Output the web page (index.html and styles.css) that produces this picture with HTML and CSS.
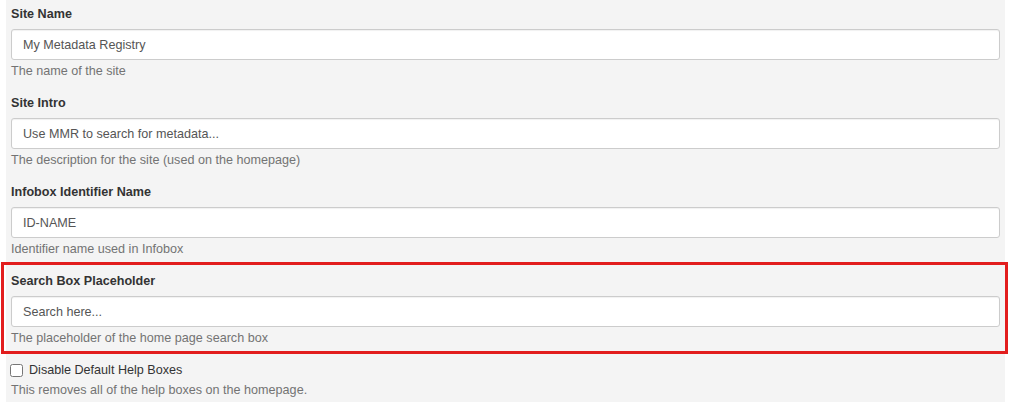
FILE: index.html
```html
<!DOCTYPE html>
<html>
<head>
<meta charset="utf-8">
<link rel="stylesheet" href="styles.css">
</head>
<body>
<div class="panel">
  <div class="form-group">
    <label class="control-label">Site Name</label>
    <input class="form-control" type="text" value="My Metadata Registry">
    <div class="help-block">The name of the site</div>
  </div>
  <div class="form-group">
    <label class="control-label">Site Intro</label>
    <input class="form-control" type="text" value="Use MMR to search for metadata...">
    <div class="help-block">The description for the site (used on the homepage)</div>
  </div>
  <div class="form-group">
    <label class="control-label">Infobox Identifier Name</label>
    <input class="form-control" type="text" value="ID-NAME">
    <div class="help-block">Identifier name used in Infobox</div>
  </div>
  <div class="form-group highlighted">
    <label class="control-label">Search Box Placeholder</label>
    <input class="form-control" type="text" value="Search here...">
    <div class="help-block">The placeholder of the home page search box</div>
  </div>
  <div class="form-group checkbox-group">
    <label class="checkbox-label"><input type="checkbox" class="checkbox"> Disable Default Help Boxes</label>
    <div class="help-block">This removes all of the help boxes on the homepage.</div>
  </div>
</div>
</body>
</html>
```

FILE: styles.css
```css
html, body {
  margin: 0;
  padding: 0;
  background: #ffffff;
}

body {
  font-family: "Liberation Sans", Arial, sans-serif;
  font-size: 12.6px;
  line-height: 18px;
  color: #333333;
}

.panel {
  margin-left: 6px;
  min-height: 402px;
  box-sizing: border-box;
  width: 999px;
  background: #f4f4f4;
  padding: 5px 5px 0 5px;
}

.form-group {
  display: flex;
  flex-direction: column;
  margin-bottom: 14px;
  position: relative;
}

.control-label {
  display: block;
  font-weight: bold;
  color: #333333;
  margin-bottom: 6px;
  line-height: 18px;
}

.form-control {
  display: block;
  box-sizing: border-box;
  width: 100%;
  height: 31px;
  margin: 0;
  padding: 5px 11px;
  font-family: "Liberation Sans", Arial, sans-serif;
  font-size: 12.6px;
  color: #555555;
  background: #ffffff;
  border: 1px solid #cccccc;
  border-radius: 3px;
  box-shadow: inset 0 1px 1px rgba(0, 0, 0, 0.06);
  outline: none;
}

.help-block {
  margin-top: 2px;
  color: #737373;
  line-height: 18px;
}

.highlighted::after {
  content: "";
  position: absolute;
  top: -10px;
  bottom: -7px;
  left: -10px;
  right: -8px;
  border: 3px solid #e21d1d;
  pointer-events: none;
}

.checkbox-label {
  display: flex;
  align-items: center;
  line-height: 18px;
  color: #333333;
}

.checkbox {
  width: 13px;
  height: 13px;
  margin: 1px 6px 0 -1px;
}
```
